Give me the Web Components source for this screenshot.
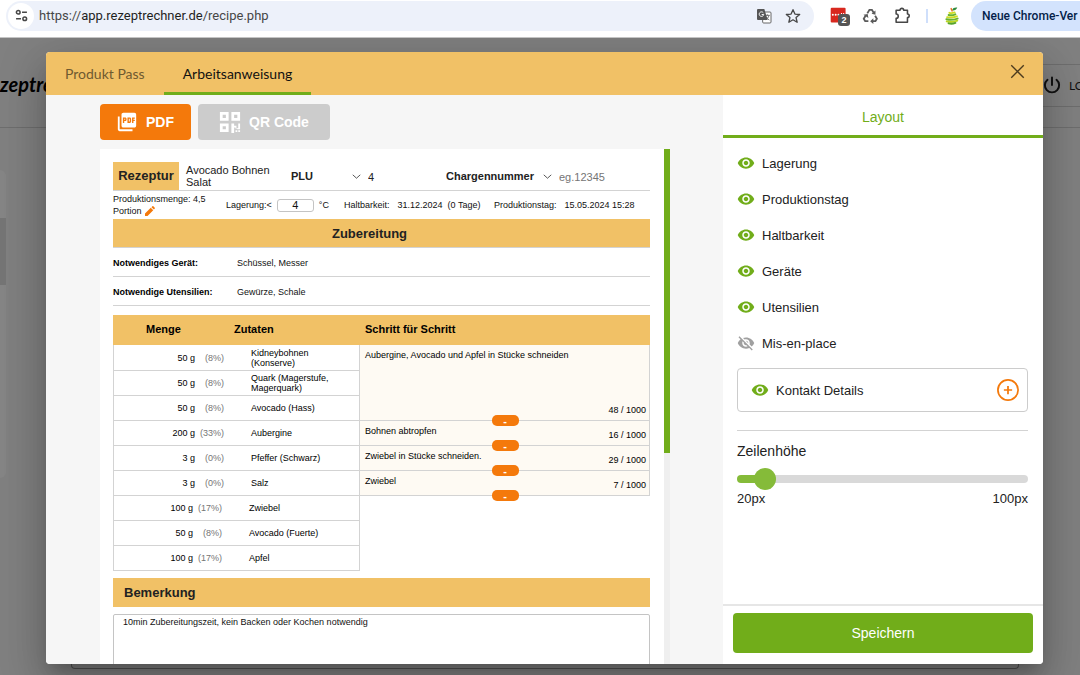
<!DOCTYPE html>
<html lang="de">
<head>
<meta charset="utf-8">
<title>Rezeptrechner – Arbeitsanweisung</title>
<style>
  html, body { margin: 0; height: 100%; }
  body {
    --amber: #f1c166; --green: #71ad1a; --orange: #f4790b; --line: #d3d3d3;
    display: flex; flex-direction: column; overflow: hidden;
    font-family: "Liberation Sans", Arial, sans-serif; color: #222;
  }
</style>
</head>
<body>
<browser-bar url-scheme="https://" url-host="app.rezeptrechner.de" url-path="/recipe.php"></browser-bar>
<app-page>
  <recipe-dialog>
    <action-bar slot="main"></action-bar>
    <recipe-sheet slot="main"></recipe-sheet>
    <layout-panel slot="side"></layout-panel>
  </recipe-dialog>
</app-page>

<script>
const ICONS = {
  eye: '<path d="M12 4.5C7 4.5 2.73 7.61 1 12c1.73 4.39 6 7.5 11 7.5s9.27-3.11 11-7.5c-1.73-4.39-6-7.5-11-7.5zM12 17c-2.76 0-5-2.24-5-5s2.24-5 5-5 5 2.24 5 5-2.24 5-5 5zm0-8c-1.66 0-3 1.34-3 3s1.34 3 3 3 3-1.34 3-3-1.34-3-3-3z"/>',
  eyeoff: '<path d="M12 7c2.76 0 5 2.24 5 5 0 .65-.13 1.26-.36 1.83l2.92 2.92c1.51-1.26 2.7-2.89 3.43-4.75-1.73-4.39-6-7.5-11-7.5-1.4 0-2.74.25-3.98.7l2.16 2.16C10.74 7.13 11.35 7 12 7zM2 4.27l2.28 2.28.46.46C3.08 8.3 1.78 10.02 1 12c1.73 4.39 6 7.5 11 7.5 1.55 0 3.03-.3 4.38-.84l.42.42L19.73 22 21 20.73 3.27 3 2 4.27zM7.53 9.8l1.55 1.55c-.05.21-.08.43-.08.65 0 1.66 1.34 3 3 3 .22 0 .44-.03.65-.08l1.55 1.55c-.67.33-1.41.53-2.2.53-2.76 0-5-2.24-5-5 0-.79.2-1.53.53-2.2zm4.31-.78l3.15 3.15.02-.16c0-1.66-1.34-3-3-3l-.17.01z"/>',
  pdf: '<path d="M20 2H8c-1.1 0-2 .9-2 2v12c0 1.1.9 2 2 2h12c1.1 0 2-.9 2-2V4c0-1.1-.9-2-2-2zm-8.5 7.5c0 .83-.67 1.5-1.5 1.5H9v2H7.5V7H10c.83 0 1.5.67 1.5 1.5v1zm5 2c0 .83-.67 1.5-1.5 1.5h-2.5V7H15c.83 0 1.5.67 1.5 1.5v3zm4-3H19v1h1.5V11H19v2h-1.5V7h3v1.5zM9 9.5h1v-1H9v1zM4 6H2v14c0 1.1.9 2 2 2h14v-2H4V6zm10 5.5h1v-3h-1v3z"/>',
  qr: '<path fill-rule="evenodd" d="M1 1h9.500v9.500H1zM4 4v3.500h3.500V4zM13.500 1H23v9.500h-9.500zM16.500 4v3.500H20V4zM1 13.500h9.500V23H1zM4 16.500V20h3.500v-3.500zM13.500 13.500h3v2.500h2.500v2.500h2v-5h2v6.500h-3v-1h-2v-1h-1.500v6h-3zM18 21h2v2h-2zM21 21h2v2h-2z"/>',
  pencil: '<path d="M2 17v5h5L18.500 10.500l-5-5L2 17zM21.500 7.200a1.300 1.300 0 0 0 0-1.900l-2.800-2.800a1.300 1.300 0 0 0-1.900 0L15 4.300l4.900 4.900 1.600-2z"/>',
  chevron: '<path fill="none" stroke="currentColor" stroke-width="2" d="M2 7.500l10 9 10-9"/>',
  close: '<path fill="none" stroke="currentColor" stroke-width="2.200" d="M2 2l20 20M22 2L2 22"/>',
  plus: '<g fill="none" stroke="currentColor" stroke-width="1.900"><circle cx="12" cy="12" r="11"/><path d="M12 7.500v9M7.500 12h9"/></g>',
  power: '<path fill="none" stroke="currentColor" stroke-width="2.600" stroke-linecap="round" d="M12 2v10M6 5a9.500 9.500 0 1 0 12 0"/>',
  tune: '<g fill="none" stroke="currentColor" stroke-width="2.800"><circle cx="6" cy="6" r="3.400"/><circle cx="18" cy="18" r="3.400"/><path d="M13 6h9M2 18h9"/></g>',
  star: '<path fill="none" stroke="currentColor" stroke-width="2" stroke-linejoin="round" d="M12 2.500l2.900 6.600 7.100.6-5.400 4.700 1.600 7L12 17.700l-6.200 3.700 1.600-7L2 9.700l7.100-.6z"/>',
  puzzle: '<path fill="none" stroke="currentColor" stroke-width="2.200" stroke-linejoin="round" d="M3 4.500h5.500a2.600 2.600 0 0 1 5.200 0H19V10a2.500 2.500 0 0 1 0 5v6.500H3v-5.500c4 0 4-6 0-6z"/>',
  recycle: '<g fill="none" stroke="#5a5a5a" stroke-width="2.600"><path d="M7.500 9L10.500 4h3.500l2.500 4M18.500 12.500l2.500 4-2 3.500H15M9 20H4.500l-2-3.500L5 12.500"/></g><g fill="#5a5a5a"><path d="M19 5v6l-5.500-1.500zM16 16v8l-4.500-4zM2 11l6-1 1 5.500z"/></g>',
  translate: '<rect x="10" y="6" width="12.500" height="16.500" rx="1.500" fill="#fff" stroke="#666" stroke-width="1.500"/><path d="M13.500 11h7M17 9.500V11M19.500 11c-.8 3.500-3 5.500-5 6.500M15 13c1 2 3 4 5 5" fill="none" stroke="#666" stroke-width="1.400"/><path fill="#555" d="M3 1.500h9.500l5 16.500H3a1.500 1.500 0 0 1-1.500-1.500V3A1.500 1.500 0 0 1 3 1.500z"/><path d="M11 7.200a3.400 3.400 0 1 0 .6 2.600H8.500" fill="none" stroke="#fff" stroke-width="1.500"/>',
  extension: '<rect x="1" y="1" width="21" height="21" rx="1.500" fill="#d8281f"/><g fill="#fff"><circle cx="4" cy="11" r="1.400"/><circle cx="8" cy="11" r="1.400"/><circle cx="12" cy="11" r="1.400"/><path d="M15.500 8.500h1.500v5h-1.500zM18.500 8.500H20v5h-1.500z"/></g>',
  pear: '<g fill="none" stroke-linecap="round" stroke-width="2.600"><path stroke="#cddc20" d="M8.500 7.800c2 .6 5 .3 7-.6"/><path stroke="#69b32d" d="M7.500 10.600c3 .8 6.500.3 9-.8"/><path stroke="#cddc20" d="M5.500 13.500c4 1 9 .4 13-1"/><path stroke="#69b32d" d="M4.500 16.400c5 1.200 10.500.5 15-1"/><path stroke="#b9d422" d="M5 19.200c4.500 1.200 10 .6 14-1"/><path stroke="#57a32c" d="M7.500 21.800c3 .8 6.500.4 9-.6"/></g><path fill="#2d8b3c" d="M12 4.500C13 1 16 .5 19 .8 18 4 15 5 12 4.500z"/><path d="M12.500 6L10.500 1.500" stroke="#e86c1a" stroke-width="1.800"/>'
};

const define = (name, html, setup) => {
  const tpl = document.createElement('template');
  tpl.innerHTML = '<style>*{box-sizing:border-box} button,input,select,textarea{font:inherit;color:inherit;margin:0} button{cursor:pointer}</style>' + html;
  customElements.define(name, class extends HTMLElement {
    constructor() { super(); this.attachShadow({ mode: 'open' }).append(tpl.content.cloneNode(true)); }
    connectedCallback() { if (setup && !this.ready) { this.ready = true; setup(this, this.shadowRoot); } }
  });
};

define('ui-icon', `
<style>
  :host { display: block; flex: none; width: var(--size, 18px); height: var(--size, 18px); }
  svg { display: block; width: 100%; height: 100%; fill: currentColor; }
</style>
<svg viewBox="0 0 24 24" aria-hidden="true"></svg>`,
(el, root) => { root.querySelector('svg').innerHTML = ICONS[el.getAttribute('name')]; });

define('browser-bar', `
<style>
  :host { display: flex; align-items: center; flex: none; height: 38px; padding: 0 0 6px 6px; box-sizing: border-box;
    background: #fff; border-bottom: 1px solid #c4c4c4; overflow: hidden; color: #474747;
    font-family: Roboto, sans-serif; font-size: 13px; }
  .pill { flex: 1; min-width: 0; display: flex; align-items: center; height: 30px; border-radius: 15px; background: #edf1fa; }
  .site { display: grid; place-items: center; width: 26px; height: 26px; margin-left: 2px; border: 0; padding: 0; border-radius: 50%; background: #fff; --size: 13px; }
  .url { flex: 1; min-width: 0; margin-left: 5px; white-space: nowrap; }
  .url b { font-weight: 400; color: #1f1f1f; }
  .tool { border: 0; background: none; padding: 0; }
  .pill .tool { margin-right: 13px; --size: 16px; }
  .tools { display: flex; align-items: center; gap: 15px; margin-left: 16px; --size: 17px; }
  .ext { position: relative; }
  .badge { position: absolute; left: 8px; top: 7px; width: 12px; height: 12px; border-radius: 3px; background: #555; color: #fff; font: bold 9px/12px "Liberation Sans", sans-serif; text-align: center; }
  .sep { width: 2px; height: 14px; background: #cfdffb; }
  .profile { --size: 18px; }
  .update { flex: none; width: 109px; height: 30px; margin-left: 10px; padding: 0 0 0 11px; border: 0; border-radius: 15px 0 0 15px; background: #d3e3fd; color: #041e49; text-align: left; white-space: nowrap; font-size: 12px; font-weight: 500; }
</style>
<div class="pill">
  <button class="site" aria-label="Website-Informationen"><ui-icon name="tune"></ui-icon></button>
  <div class="url"></div>
  <button class="tool" aria-label="Übersetzen"><ui-icon name="translate"></ui-icon></button>
  <button class="tool" aria-label="Lesezeichen"><ui-icon name="star"></ui-icon></button>
</div>
<div class="tools">
  <button class="tool ext" aria-label="Erweiterung"><ui-icon name="extension"></ui-icon><span class="badge">2</span></button>
  <button class="tool" aria-label="Recycling"><ui-icon name="recycle"></ui-icon></button>
  <button class="tool" aria-label="Erweiterungen"><ui-icon name="puzzle"></ui-icon></button>
  <span class="sep"></span>
  <button class="tool profile" aria-label="Profil"><ui-icon name="pear"></ui-icon></button>
</div>
<button class="update">Neue Chrome-Ver</button>`,
(el, root) => {
  const host = document.createElement('b');
  host.textContent = el.getAttribute('url-host');
  root.querySelector('.url').append(el.getAttribute('url-scheme'), host, el.getAttribute('url-path'));
});

define('app-page', `
<style>
  :host { flex: 1; min-height: 0; display: flex; flex-direction: column; position: relative; overflow: hidden; background: #808080; color: #111; }
  header { display: flex; align-items: center; flex: none; height: 90px; border-bottom: 1px solid #6e6e6e; box-sizing: border-box; }
  .logo { flex: 1; color: #000; text-decoration: none; font: italic bold 20px/40px Lato, sans-serif; padding-top: 2px; }
  .logout { display: flex; align-items: center; gap: 8px; width: 90px; height: 43px; padding: 0 0 0 53px; margin-top: 5px; border: 1px solid #6e6e6e; border-width: 1px 0; background: none; --size: 18px; font: 12px Lato, sans-serif; white-space: nowrap; }
  nav { width: 6px; height: 308px; margin-top: 42px; padding-top: 48px; border-radius: 0 6px 6px 0; background: #858585; }
  nav i { display: block; height: 67px; background: #757575; }
  .card { flex: 1; margin: 0 61px 6px 71px; border: 1px solid #505050; border-top: 0; border-radius: 0 0 4px 4px; }
  .overlay { position: absolute; inset: 0; display: flex; padding: 14px 37px 11px 46px; }
</style>
<header><a class="logo" href="#">zeptre</a><button class="logout"><ui-icon name="power"></ui-icon>LO</button></header>
<nav><i></i></nav>
<div class="card"></div>
<div class="overlay"><slot></slot></div>`);

define('recipe-dialog', `
<style>
  :host { flex: 1; min-width: 0; display: flex; flex-direction: column; overflow: hidden; border-radius: 4px; background: #fff;
    box-shadow: 0 11px 15px -7px rgba(0,0,0,.2), 0 24px 38px 3px rgba(0,0,0,.14), 0 9px 46px 8px rgba(0,0,0,.12); }
  header { display: flex; flex: none; height: 43px; background: var(--amber); }
  .tab { padding: 3px 19px 0; border: 0; border-bottom: 3px solid transparent; background: none; color: #6f5a30; font: 14px Lato, sans-serif; }
  .tab[aria-selected=true] { color: #111; border-color: var(--green); }
  .close { margin-left: auto; padding: 0 18px 4px; border: 0; background: none; color: #4b3b1e; --size: 15px; }
  .body { flex: 1; min-height: 0; display: flex; }
  .main { flex: 1; min-width: 0; display: flex; flex-direction: column; gap: 9px; padding: 9px 53px 0 54px; background: #f6f6f6; }
  .side { flex: none; width: 320px; display: flex; }
</style>
<header role="tablist">
  <button class="tab" role="tab" aria-selected="false">Produkt Pass</button>
  <button class="tab" role="tab" aria-selected="true">Arbeitsanweisung</button>
  <button class="close" aria-label="Schließen"><ui-icon name="close"></ui-icon></button>
</header>
<div class="body">
  <div class="main"><slot name="main"></slot></div>
  <div class="side"><slot name="side"></slot></div>
</div>`);

define('action-bar', `
<style>
  :host { display: flex; flex: none; gap: 7px; }
  button { display: flex; align-items: center; gap: 8px; height: 36px; padding: 0 17px 0 16px; border: 0; border-radius: 4px; background: var(--orange); color: #fff; font-weight: bold; font-size: 14px; --size: 22px; }
  button:disabled { background: #ccc; padding: 0 21px; }
</style>
<button><ui-icon name="pdf"></ui-icon>PDF</button>
<button disabled><ui-icon name="qr"></ui-icon>QR Code</button>`);

define('recipe-sheet', `
<style>
  :host { flex: 1; min-height: 0; display: flex; overflow: hidden; }
  .page { flex: 1; min-width: 0; padding: 13px 14px 0 13px; background: #fff; overflow: hidden; font-size: 9px; line-height: 12px; color: #111; }
  .bar { width: 6px; flex: none; background: #efefef; }
  .bar i { display: block; height: 59%; background: var(--green); }
  .head { display: grid; grid-template-columns: 66px 112fr 70px 85fr 106px 98fr; align-items: center; height: 29px; border-bottom: 1px solid var(--line); font-size: 11px; color: #222; }
  .tag { align-self: stretch; display: grid; place-items: center; background: var(--amber); font-size: 13px; font-weight: bold; }
  .title { padding-left: 7px; width: 98px; }
  .pick { display: grid; align-items: center; font-weight: bold; --size: 9px; }
  .pick > * { grid-area: 1 / 1; }
  .pick ui-icon { justify-self: end; pointer-events: none; }
  select { appearance: none; border: 0; background: none; padding: 0; width: 100%; line-height: 14px; }
  .head input { min-width: 0; width: 100%; border: 0; background: none; padding: 1px 0 0 7px; line-height: 14px; }
  input::placeholder { color: #757575; }
  .meta { display: grid; grid-template-columns: 113fr 118fr 150fr 156fr; align-items: center; height: 28px; }
  .meta > div { display: flex; align-items: center; gap: 8px; white-space: nowrap; }
  .meta .store { gap: 5px; }
  .meta .qty { white-space: normal; display: block; }
  .qty button { border: 0; padding: 0; background: none; color: var(--orange); --size: 12px; vertical-align: bottom; }
  .meta input { width: 37px; height: 13px; padding: 0; border: 1px solid #c4c4c4; border-radius: 3px; text-align: center; font-size: 11px; background: #fff; }
  h2 { margin: 0; height: 29px; font-size: 13px; line-height: 29px; background: var(--amber); color: #222; border-bottom: 1px solid var(--line); }
  .center { text-align: center; padding-right: 24px; }
  .note { padding-left: 11px; margin-top: 7px; border: 0; }
  dl { margin: 0; }
  dl div { display: flex; height: 29px; align-items: center; padding-top: 1px; border-bottom: 1px solid var(--line); }
  dt { width: 124px; font-weight: bold; color: #000; }
  dd { margin: 0; }
  table { width: 100%; margin-top: 9px; table-layout: fixed; border-spacing: 0; color: #000; }
  th { height: 30px; padding: 0 0 2px; background: var(--amber); text-align: left; font-size: 11px; }
  th.menge { padding-left: 33px; } th.zutat { padding-left: 7px; } th.schritt { padding-left: 5px; }
  td { height: 25px; padding: 0; line-height: 10px; border-bottom: 1px solid var(--line); }
  tr:first-child td { height: 26px; }
  .amt { text-align: right; padding-right: 2px; border-left: 1px solid var(--line); }
  .pct { text-align: right; padding-right: 3px; color: #757575; }
  .name { padding: 0 20px 0 24px; border-right: 1px solid var(--line); }
  .free .amt { padding-right: 4px; } .free .pct { padding-right: 5px; } .free .name { padding-left: 22px; }
  .step { position: relative; vertical-align: top; background: #fefaf3; border-right: 1px solid var(--line); }
  textarea { display: block; width: 100%; resize: none; border: 0; background: none; font-size: 9px; line-height: 12px; }
  .step textarea { height: 22px; padding: 4px 5px; overflow: hidden; }
  .step[rowspan] textarea { height: 60px; }
  .count { position: absolute; right: 3px; bottom: 4px; line-height: 12px; }
  .step button { position: absolute; left: 50%; bottom: -6px; z-index: 1; width: 27px; height: 11px; margin-left: -13px; padding: 0; border: 0; border-radius: 5px; background: var(--orange); color: #fff; font-weight: bold; font-size: 11px; line-height: 10px; }
  .remark { margin-top: 7px; height: 80px; padding: 1px 9px; border: 1px solid #c4c4c4; border-radius: 2px; }
</style>
<div class="page">
  <div class="head">
    <span class="tag">Rezeptur</span>
    <span class="title">Avocado Bohnen Salat</span>
    <span class="pick"><select aria-label="Feld 1"><option>PLU</option></select><ui-icon name="chevron"></ui-icon></span>
    <input value="4" aria-label="PLU">
    <span class="pick"><select aria-label="Feld 2"><option>Chargennummer</option></select><ui-icon name="chevron"></ui-icon></span>
    <input placeholder="eg.12345" aria-label="Chargennummer">
  </div>
  <div class="meta">
    <div class="qty">Produktionsmenge: 4,5<br>Portion <button aria-label="Menge bearbeiten"><ui-icon name="pencil"></ui-icon></button></div>
    <div class="store"><label for="temp">Lagerung:&lt;</label><input id="temp" value="4"><span>°C</span></div>
    <div><span>Haltbarkeit:</span><span>31.12.2024&nbsp; (0 Tage)</span></div>
    <div><span>Produktionstag:</span><span>15.05.2024 15:28</span></div>
  </div>
  <h2 class="center">Zubereitung</h2>
  <dl>
    <div><dt>Notwendiges Gerät:</dt><dd>Schüssel, Messer</dd></div>
    <div><dt>Notwendige Utensilien:</dt><dd>Gewürze, Schale</dd></div>
  </dl>
  <table>
    <colgroup><col style="width:84px"><col style="width:30px"><col style="width:133px"><col></colgroup>
    <thead><tr><th class="menge" colspan="2">Menge</th><th class="zutat">Zutaten</th><th class="schritt">Schritt für Schritt</th></tr></thead>
    <tbody></tbody>
  </table>
  <h2 class="note">Bemerkung</h2>
  <textarea class="remark" aria-label="Bemerkung">10min Zubereitungszeit, kein Backen oder Kochen notwendig</textarea>
</div>
<div class="bar"><i></i></div>`,
(el, root) => {
  const rows = [
    ['50 g', '(8%)', 'Kidneybohnen (Konserve)', 'Aubergine, Avocado und Apfel in Stücke schneiden', 48, 3],
    ['50 g', '(8%)', 'Quark (Magerstufe, Magerquark)'],
    ['50 g', '(8%)', 'Avocado (Hass)'],
    ['200 g', '(33%)', 'Aubergine', 'Bohnen abtropfen', 16],
    ['3 g', '(0%)', 'Pfeffer (Schwarz)', 'Zwiebel in Stücke schneiden.', 29],
    ['3 g', '(0%)', 'Salz', 'Zwiebel', 7],
    ['100 g', '(17%)', 'Zwiebel', null],
    ['50 g', '(8%)', 'Avocado (Fuerte)', null],
    ['100 g', '(17%)', 'Apfel', null]
  ];
  root.querySelector('tbody').innerHTML = rows.map(([amt, pct, name, step, count, span]) => `
    <tr${step === null ? ' class="free"' : ''}><td class="amt">${amt}</td><td class="pct">${pct}</td><td class="name">${name}</td>${step ? `
    <td class="step"${span ? ` rowspan="${span}"` : ''}><textarea aria-label="Schritt">${step}</textarea><span class="count">${count} / 1000</span><button aria-label="Schritt verbinden">-</button></td>` : ''}</tr>`).join('');
});

define('visibility-toggle', `
<style>
  :host { display: flex; }
  button { display: flex; align-items: center; gap: 7px; height: 36px; padding: 0; border: 0; background: none; font-size: 13px; color: #222; }
  ui-icon { color: var(--green); }
  :host([off]) ui-icon { color: #a0a0a0; }
</style>
<button><ui-icon></ui-icon><slot></slot></button>`,
(el, root) => {
  const off = el.hasAttribute('off');
  const icon = document.createElement('ui-icon');
  icon.setAttribute('name', off ? 'eyeoff' : 'eye');
  root.querySelector('ui-icon').replaceWith(icon);
  root.querySelector('button').setAttribute('aria-pressed', String(!off));
});

define('layout-panel', `
<style>
  :host { flex: 1; min-width: 0; display: flex; flex-direction: column; background: #fff; color: #222; }
  h2 { margin: 0; flex: none; height: 43px; border-bottom: 3px solid var(--green); text-align: center; font-size: 14px; line-height: 44px; font-weight: 400; color: var(--green); }
  .body { flex: 1; min-height: 0; padding: 7px 15px 0 14px; }
  .box { display: flex; align-items: center; justify-content: space-between; height: 44px; margin-top: 7px; padding: 0 8px 0 13px; border: 1px solid #ccc; border-radius: 4px; }
  .add { border: 0; padding: 0; background: none; color: var(--orange); --size: 22px; }
  hr { margin: 18px 0 11px; border: 0; border-top: 1px solid var(--line); }
  label { display: block; font-size: 14px; line-height: 18px; }
  input { display: block; appearance: none; width: 100%; height: 22px; margin: 8px 0 0; background: none; }
  input::-webkit-slider-runnable-track { height: 8px; border-radius: 4px; background: linear-gradient(90deg, #85bb39 9%, #d9d9d9 9%); }
  input::-webkit-slider-thumb { appearance: none; width: 22px; height: 22px; margin-top: -7px; border-radius: 50%; background: #85bb39; }
  .range { display: flex; justify-content: space-between; font-size: 13px; line-height: 18px; }
  footer { flex: none; padding: 7px 10px 11px; border-top: 2px solid #e6e6e6; }
  .save { display: block; width: 100%; height: 40px; border: 0; border-radius: 4px; background: var(--green); color: #fff; font-size: 14px; }
</style>
<h2>Layout</h2>
<div class="body">
  <visibility-toggle>Lagerung</visibility-toggle>
  <visibility-toggle>Produktionstag</visibility-toggle>
  <visibility-toggle>Haltbarkeit</visibility-toggle>
  <visibility-toggle>Geräte</visibility-toggle>
  <visibility-toggle>Utensilien</visibility-toggle>
  <visibility-toggle off>Mis-en-place</visibility-toggle>
  <div class="box"><visibility-toggle>Kontakt Details</visibility-toggle><button class="add" aria-label="Hinzufügen"><ui-icon name="plus"></ui-icon></button></div>
  <hr>
  <label for="lh">Zeilenhöhe</label>
  <input id="lh" type="range" min="20" max="100" value="25">
  <div class="range"><span>20px</span><span>100px</span></div>
</div>
<footer><button class="save">Speichern</button></footer>`);
</script>
</body>
</html>
